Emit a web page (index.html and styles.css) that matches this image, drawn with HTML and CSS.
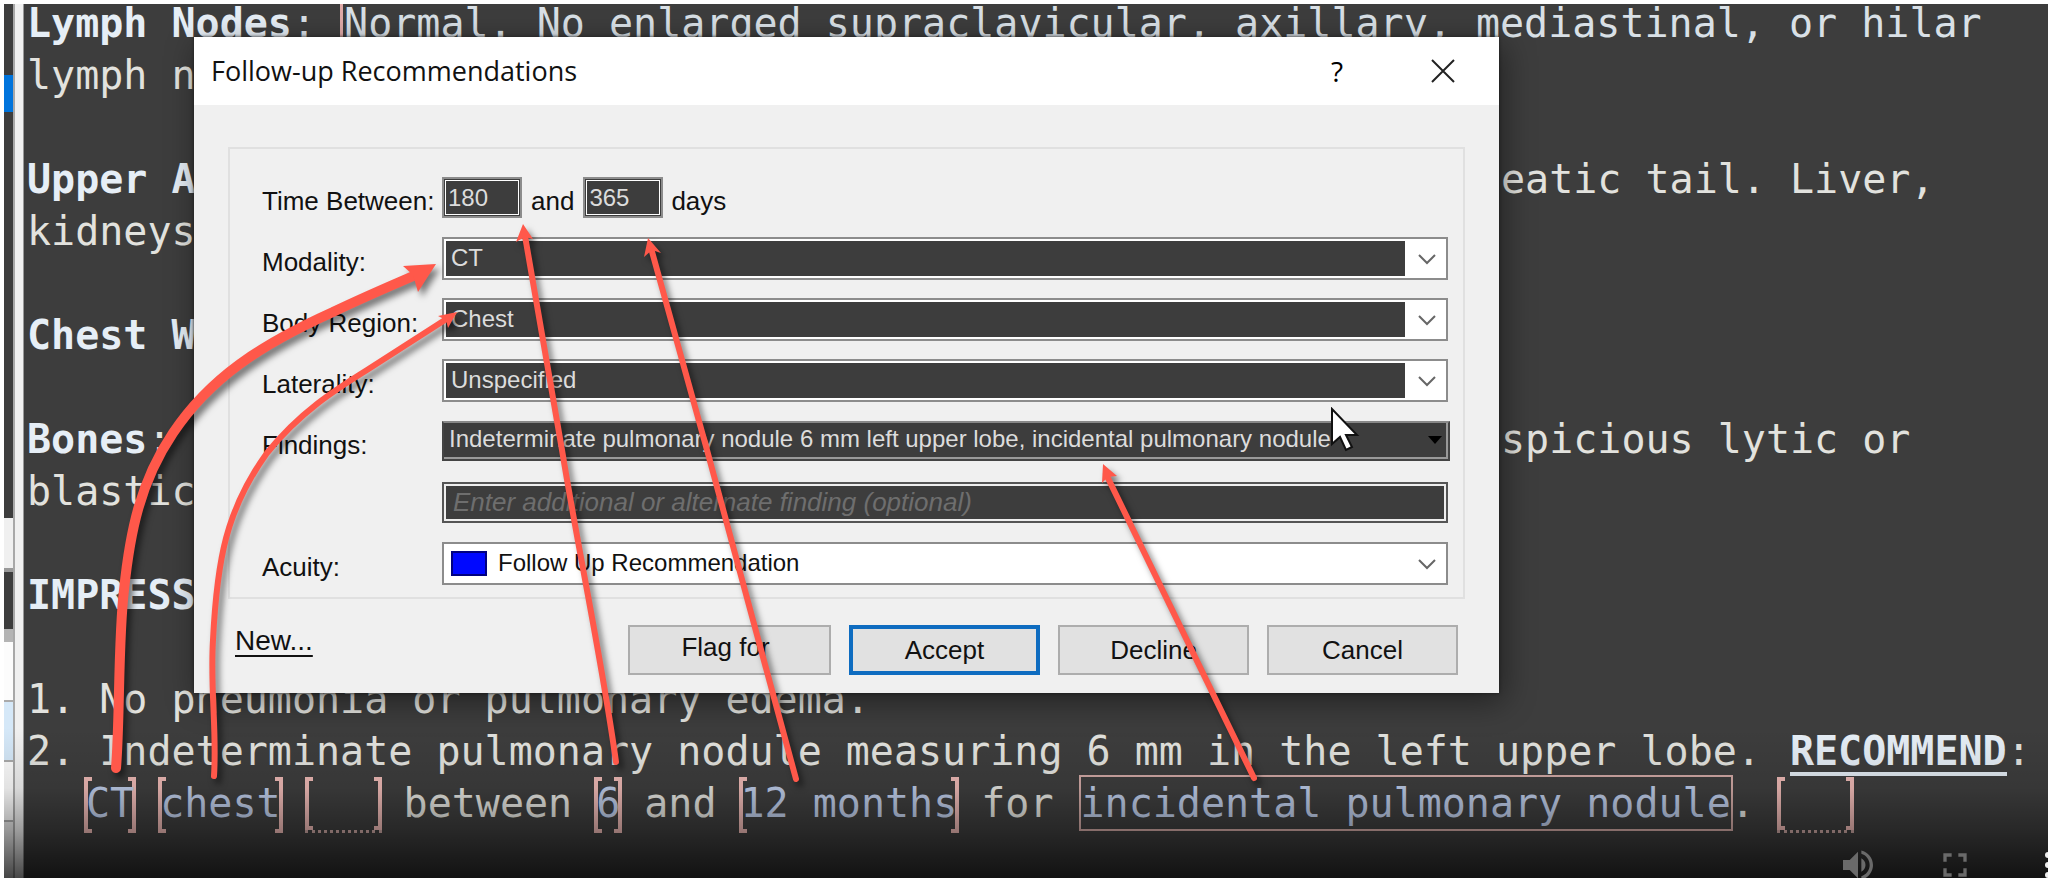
FILE: index.html
```html
<!DOCTYPE html>
<html lang="en">
<head>
<meta charset="utf-8">
<title>Follow-up Recommendations</title>
<link rel="stylesheet" href="styles.css">
</head>
<body>
<main class="stage">
  <aside class="strip">
    <div class="cell dark top"></div>
    <div class="cell selected"></div>
    <div class="cell dark mid"></div>
    <div class="cell header"></div>
    <div class="cell dark low"></div>
    <div class="cell splitter"></div>
    <div class="cell item"></div>
    <div class="cell item active"></div>
    <div class="cell item"></div>
    <div class="cell rest"></div>
  </aside>
  <div class="divider"></div>
  <article class="report">
    <p class="first"><b>Lymph Nodes</b>: <span class="caret"></span>Normal. No enlarged supraclavicular, axillary, mediastinal, or hilar</p>
    <p>lymph n</p>
    <p>&nbsp;</p>
    <p class="split"><b>Upper A</b><span>eatic tail. Liver,</span></p>
    <p>kidneys</p>
    <p>&nbsp;</p>
    <p><b>Chest W</b></p>
    <p>&nbsp;</p>
    <p class="split"><span><b>Bones</b>:</span><span>spicious lytic or</span></p>
    <p>blastic</p>
    <p>&nbsp;</p>
    <p><b>IMPRESS</b></p>
    <p>&nbsp;</p>
    <p>1. No pneumonia or pulmonary edema.</p>
    <p class="spread"><span>2. Indeterminate pulmonary nodule measuring 6 mm in the left upper lobe.</span><span><b class="under">RECOMMEND</b>:</span></p>
    <p class="fields">
      <span class="token">CT</span>
      <span class="token">chest</span>
      <span class="token blank"></span>
      <span>between</span>
      <span class="token">6</span>
      <span>and</span>
      <span class="token">12 months</span>
      <span>for</span>
      <span class="ending"><span class="boxed">incidental pulmonary nodule</span>.</span>
      <span class="token blank"></span>
    </p>
  </article>

  <div class="shade"></div>

  <div class="player">
    <button class="ctl" aria-label="Mute"><svg width="40" height="40" viewBox="0 0 24 24"><path fill="currentColor" d="M3 9v6h4l5 5V4L7 9H3zm13.500 3c0-1.770-1.020-3.290-2.500-4.030v8.050c1.480-.730 2.500-2.250 2.500-4.020zM14 3.230v2.060c2.890.860 5 3.540 5 6.710s-2.110 5.850-5 6.710v2.060c4.010-.910 7-4.490 7-8.770s-2.990-7.860-7-8.770z"/></svg></button>
    <button class="ctl" aria-label="Full screen"><svg width="40" height="40" viewBox="0 0 24 24"><path fill="currentColor" d="M7 14H5v5h5v-2H7v-3zm-2-4h2V7h3V5H5v5zm12 7h-3v2h5v-5h-2v3zM14 5v2h3v3h2V5h-5z"/></svg></button>
    <button class="ctl more" aria-label="More options"><svg width="6" height="40" viewBox="0 0 6 40"><circle cx="6" cy="10" r="3"/><circle cx="6" cy="20" r="3"/><circle cx="6" cy="30" r="3"/></svg></button>
  </div>

  <section class="dialog" role="dialog" aria-labelledby="dlg-title">
    <header class="titlebar">
      <h1 id="dlg-title">Follow-up Recommendations</h1>
      <button class="help" aria-label="Help">?</button>
      <button class="close" aria-label="Close"><svg width="24" height="24" viewBox="0 0 24 24"><path d="M1 1L23 23M23 1L1 23" stroke="#222" stroke-width="2"/></svg></button>
    </header>
    <form class="body" onsubmit="return false">
      <div class="group">
        <label for="from">Time Between:</label>
        <div class="times">
          <input id="from" class="num" value="180">
          <label for="to">and</label>
          <input id="to" class="num" value="365">
          <span class="unit">days</span>
        </div>
        <label for="modality">Modality:</label>
        <div class="combo"><select id="modality"><option>CT</option></select><svg class="chev" width="18" height="12" viewBox="0 0 18 12"><path d="M1 2L9 10L17 2"/></svg></div>
        <label for="region">Body Region:</label>
        <div class="combo"><select id="region"><option>Chest</option></select><svg class="chev" width="18" height="12" viewBox="0 0 18 12"><path d="M1 2L9 10L17 2"/></svg></div>
        <label for="lat">Laterality:</label>
        <div class="combo"><select id="lat"><option>Unspecified</option></select><svg class="chev" width="18" height="12" viewBox="0 0 18 12"><path d="M1 2L9 10L17 2"/></svg></div>
        <label for="findings">Findings:</label>
        <div class="combo flat"><select id="findings"><option>Indeterminate pulmonary nodule 6 mm left upper lobe, incidental pulmonary nodule</option></select><svg class="tri" width="14" height="8" viewBox="0 0 14 8"><path d="M0 0H14L7 8Z"/></svg></div>
        <input class="extra" aria-label="Additional finding" placeholder="Enter additional or alternate finding (optional)">
        <label for="acuity">Acuity:</label>
        <div class="combo light"><span class="swatch"></span><select id="acuity"><option>Follow Up Recommendation</option></select><svg class="chev" width="18" height="12" viewBox="0 0 18 12"><path d="M1 2L9 10L17 2"/></svg></div>
      </div>
      <div class="actions">
        <a class="new" href="#">New...</a>
        <button class="btn flag">Flag for</button>
        <button class="btn primary">Accept</button>
        <button class="btn">Decline</button>
        <button class="btn">Cancel</button>
      </div>
    </form>
  </section>

  <svg class="notes" width="2052" height="882" viewBox="0 0 2052 882">
    <g fill="none" stroke="#ff584a" stroke-linecap="round">
      <path stroke-width="10" d="M116 768C120 720 118 640 124 590C130 532 140 482 173 433C210 378 260 345 333 312C360 299 390 286 418 274"/>
      <path stroke-width="6" d="M214 776C217 730 210 690 213 640C217 560 226 510 267 453C300 412 335 390 367 370L448 318"/>
      <path stroke-width="6" d="M616 762C602 660 580 560 562 450L525 236"/>
      <path stroke-width="6" d="M796 779L707 450L651 248"/>
      <path stroke-width="6" d="M1254 778L1106 474"/>
    </g>
    <g fill="#ff584a">
      <path d="M436 264L403 266L413 275L418 292Z"/>
      <path d="M457 312L438 316L446 320L448 328Z"/>
      <path d="M523 224L516 242L525 237L533 239Z"/>
      <path d="M648 238L644 257L652 250L661 253Z"/>
      <path d="M1103 464L1102 483L1108 477L1117 476Z"/>
    </g>
  </svg>
  <svg class="pointer" width="30" height="46" viewBox="0 0 30 46"><path d="M2 2V37L10 30L16 43L22 40L16 28H27Z" fill="#fff" stroke="#111" stroke-width="2"/></svg>
</main>
</body>
</html>
```
FILE: styles.css
```css
* { box-sizing: border-box; }
body { margin: 0; padding: 4px; background: #fff; }
.stage {
  position: relative;
  display: flex;
  min-height: calc(100vh - 8px);
  overflow: hidden;
  background: #3d3d3d;
}

/* left edge of the neighbouring pane */
.strip { display: flex; flex-direction: column; width: 9px; }
.cell { background: #fcfcfc; }
.dark { background: #3d3d3d; }
.top { height: 71px; }
.selected { height: 37px; background: #0074dc; }
.mid { height: 406px; }
.header { height: 54px; background: #f0f0f0; border-bottom: 4px solid #999; }
.low { height: 57px; }
.splitter { height: 13px; background: #b4b4b4; }
.item { height: 60px; border-bottom: 2px solid #aaa; }
.active { background: #d5e8f8; }
.rest { flex: 1; background: #e8e8e8; }
.divider { width: 11px; background: #f0f0f0; border-left: 2px solid #a8a8a8; border-right: 1px solid #999; }

/* report text */
.report {
  flex: 1;
  min-width: 0;
  height: 0;
  margin-top: -7px;
  padding-left: 3px;
  font: 40px/52px "DejaVu Sans Mono", monospace;
  color: #e2e2de;
  white-space: nowrap;
}
.report p { margin: 0; }
.report b { color: #e6eef6; }
.report .first { color: #d9e0e6; }
.caret { border-left: 3px solid #e0aaa8; margin-right: 1px; }
.split { display: grid; grid-template-columns: 1474px 1fr; }
.spread { display: flex; gap: 29px; }
.under { display: inline-block; line-height: 42px; border-bottom: 4px solid #e2eaf2; }
.report .fields { display: flex; gap: 22px; padding-left: 57px; }
.token, .boxed { color: #bccae6; }
.token {
  height: 56px;
  padding: 0 2px;
  background:
    linear-gradient(#ecb8b4, #ecb8b4) left / 4px 100%,
    linear-gradient(#ecb8b4, #ecb8b4) right / 4px 100%,
    linear-gradient(#ecb8b4, #ecb8b4) left top / 8px 4px,
    linear-gradient(#ecb8b4, #ecb8b4) left bottom / 8px 4px,
    linear-gradient(#ecb8b4, #ecb8b4) right top / 8px 4px,
    linear-gradient(#ecb8b4, #ecb8b4) right bottom / 8px 4px;
  background-repeat: no-repeat;
}
.blank { width: 77px; border-bottom: 3px dotted #c8a4a0; }
.boxed { display: inline-block; outline: 2px solid #d0a8a4; }
.ending { padding-left: 5px; }

.shade {
  position: absolute;
  inset: auto 0 0 0;
  height: 150px;
  background: linear-gradient(transparent, rgba(0,0,0,.1) 40%, rgba(0,0,0,.35) 68%, rgba(0,0,0,.7));
}
.player { position: absolute; right: 0; bottom: -7px; display: flex; }
.ctl { display: block; padding: 0; border: 0; background: none; color: #6a6a6a; }
.ctl svg { display: block; }
.ctl + .ctl { margin-left: 57px; }
.ctl + .more { margin-left: 67px; fill: #eee; }

/* dialog */
.dialog {
  position: absolute;
  left: 190px;
  top: 33px;
  width: 1305px;
  background: #f0f0f0;
  box-shadow: 4px 8px 30px rgba(0,0,0,.45), 0 0 3px #222;
  color: #111;
  font: 26px/32px "Liberation Sans", Arial, sans-serif;
}
.titlebar { display: flex; align-items: center; height: 68px; padding: 0 44px 0 17px; background: #fff; }
h1 { flex: 1; margin: 0; font: 27px/36px "Open Sans", sans-serif; }
.help, .close { padding: 0; border: 0; background: none; font: 28px/36px "Open Sans", sans-serif; }
.close { width: 24px; margin-left: 88px; }
.close svg { display: block; }
.body { padding: 42px 34px 18px; }
.group {
  display: grid;
  grid-template-columns: 180px 1fr;
  grid-auto-rows: 61px;
  align-items: center;
  padding: 18px 15px 3px 32px;
  border: 2px solid #e0e0e0;
}
.group label, .unit { padding-top: 6px; }
.times { display: flex; align-items: center; }
.num {
  width: 80px;
  height: 41px;
  padding: 0 4px;
  border: 2px solid #8c8c8c;
  outline: 1px solid #fff;
  outline-offset: -4px;
  background: #3d3d3d;
  color: #dcdcdc;
  font: 24px/30px "Liberation Sans", Arial, sans-serif;
}
.times label { padding-left: 9px; padding-right: 9px; }
.unit { padding-left: 8px; }
.combo {
  display: grid;
  align-items: center;
  height: 43px;
  padding: 2px;
  border: 2px solid #8c8c8c;
  background: #fff;
}
.combo > * { grid-area: 1 / 1; }
select {
  appearance: none;
  width: calc(100% - 39px);
  height: 100%;
  padding: 0 4px 2px 5px;
  border: 0;
  border-radius: 0;
  background: #3d3d3d;
  color: #dcdcdc;
  font: 24px/30px "Liberation Sans", Arial, sans-serif;
}
.chev { justify-self: end; margin-right: 8px; fill: none; stroke: #666; stroke-width: 2; pointer-events: none; }
.flat { height: 40px; margin: 0 -2px 2px 0; padding: 0 2px 2px 0; background: #999; border-color: #888 #444 #444 #444; }
.flat select { width: 100%; }
.tri { justify-self: end; margin-right: 4px; pointer-events: none; }
.extra {
  grid-column: 2;
  height: 41px;
  padding: 0 9px;
  border: 2px solid #555;
  outline: 2px solid #eee;
  outline-offset: -4px;
  background: #3d3d3d;
  font: italic 26px/32px "Liberation Sans", Arial, sans-serif;
}
.extra::placeholder { color: #6e6e6e; }
.light select { width: 100%; padding-left: 52px; background: #fff; color: #111; }
.swatch { z-index: 1; width: 36px; height: 25px; margin-left: 5px; border: 2px solid #000080; background: #0008ff; }
.actions { display: flex; padding: 26px 7px 0 7px; }
.new { flex: 1; align-self: flex-start; color: #111; font-size: 28px; line-height: 32px; text-underline-offset: 5px; text-decoration-thickness: 2px; }
.btn {
  width: 191px;
  height: 50px;
  padding: 0;
  margin-left: 18px;
  border: 2px solid #adadad;
  background: #e1e1e1;
  color: #111;
  font: 26px/32px "Liberation Sans", Arial, sans-serif;
}
.flag { width: 203px; padding: 0 8px 6px 0; }
.primary { border: 4px solid #0e6cc0; }

.notes { position: absolute; left: -4px; top: -4px; pointer-events: none; filter: drop-shadow(4px 5px 3px rgba(0,0,0,.5)); }
.pointer { position: absolute; left: 1326px; top: 403px; }
```
